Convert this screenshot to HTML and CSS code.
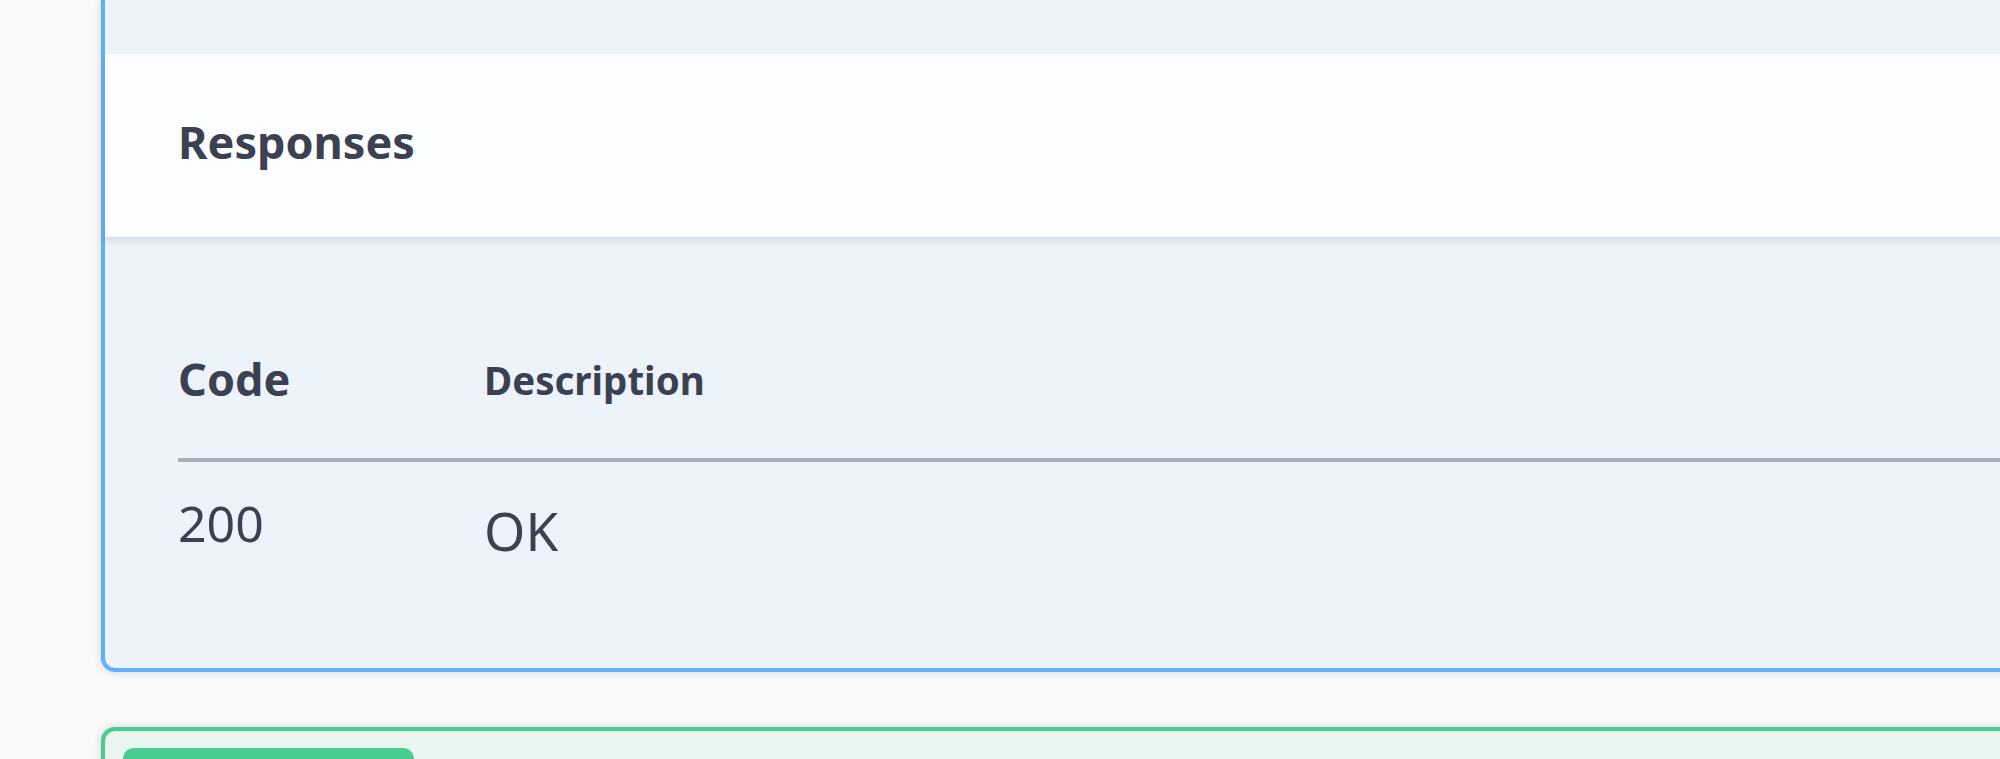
FILE: index.html
```html
<!DOCTYPE html>
<html lang="en">
<head>
<meta charset="utf-8">
<title>Responses</title>
<link rel="stylesheet" href="styles.css">
</head>
<body>
<div class="wrapper">
  <div class="opblock opblock-get">
    <div class="summary-tail"></div>
    <div class="section-header">
      <h4>Responses</h4>
    </div>
    <div class="responses-inner">
      <div class="resp-head">
        <div class="col-status-head">Code</div>
        <div class="col-desc-head">Description</div>
      </div>
      <div class="resp-row">
        <div class="col-status">200</div>
        <div class="col-desc">OK</div>
      </div>
    </div>
  </div>
  <div class="opblock opblock-post">
    <div class="summary">
      <span class="method"></span>
    </div>
  </div>
</div>
</body>
</html>
```

FILE: styles.css
```css
html, body {
  margin: 0;
  padding: 0;
}
body {
  background: #fafafa;
  width: 2000px;
  height: 759px;
  overflow: hidden;
  font-family: "Noto Sans", "Open Sans", sans-serif;
  color: #3b4151;
}
.wrapper {
  padding-left: 101px;
}
.opblock {
  width: 2200px;
  box-sizing: border-box;
  box-shadow: 0 0 9px rgba(0, 0, 0, 0.16);
}
.opblock-get {
  background: #ecf3fb;
  border: 4px solid #61affe;
  border-top: 0;
  border-radius: 0 0 14px 14px;
}
.summary-tail {
  height: 54px;
}
.section-header {
  height: 183px;
  background: #fcfdfe;
  box-shadow: 0 4px 7px rgba(0, 0, 0, 0.1);
  display: flex;
  align-items: center;
  padding: 0 73px 8px;
  box-sizing: border-box;
  position: relative;
}
.section-header h4 {
  margin: 0;
  font-size: 45px;
  font-weight: 700;
  line-height: 1.362;
  color: #3b4151;
}
.responses-inner {
  padding: 73px 0 0 73px;
}
.resp-head {
  display: grid;
  grid-template-columns: 306px 1fr;
  align-items: start;
  height: 148px;
  border-bottom: 4px solid #a8afbb;
  font-weight: 700;
}
.col-status-head {
  font-size: 45px;
  line-height: 1;
  padding-top: 46px;
}
.col-desc-head {
  font-size: 38.5px;
  line-height: 1;
  padding-top: 51px;
}
.resp-row {
  display: grid;
  grid-template-columns: 306px 1fr;
  align-items: start;
  height: 206px;
}
.col-status {
  font-size: 50px;
  line-height: 1;
  padding-top: 36px;
}
.col-desc {
  font-size: 53px;
  line-height: 1;
  padding-top: 42px;
}
.opblock-post {
  margin-top: 55px;
  background: #e9f6f0;
  border: 4px solid #49cc90;
  border-bottom: 0;
  border-radius: 14px 14px 0 0;
  height: 200px;
}
.summary {
  padding: 17px 18px;
}
.method {
  display: block;
  width: 291px;
  height: 120px;
  background: #49cc90;
  border-radius: 11px;
}
```
